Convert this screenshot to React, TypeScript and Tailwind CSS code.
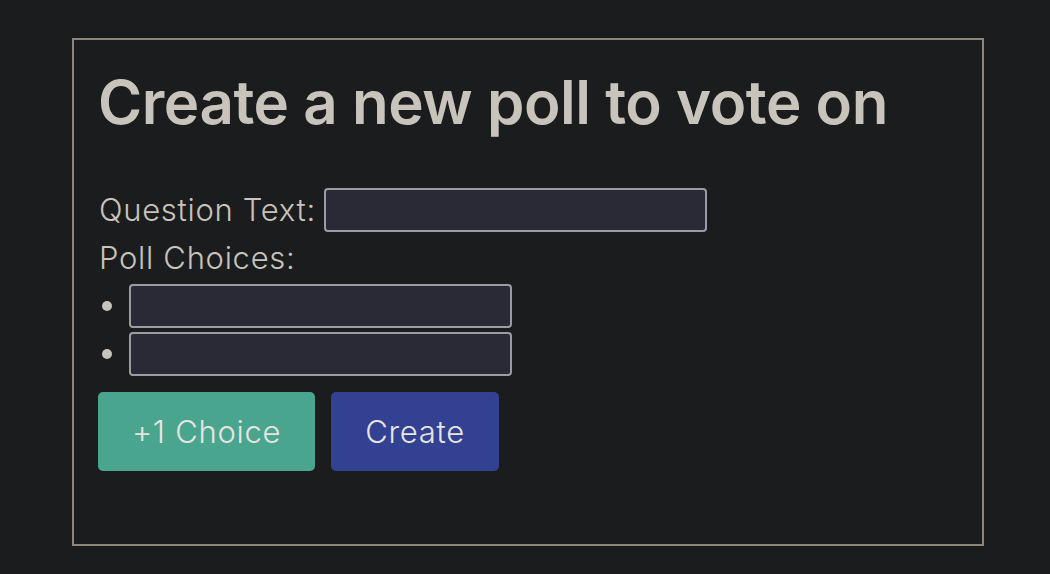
import React, { useState } from "react";

const App = () => {
  const [choices, setChoices] = useState<string[]>(["", ""]);
  const [question, setQuestion] = useState("");

  const addChoice = () => {
    setChoices([...choices, ""]);
  };

  return (
    <div
      className="min-h-[574px] w-full bg-[#1b1c1e] pt-[38px] pl-[72px] text-[#c8c3bb]"
      style={{ fontFamily: "Inter, 'Noto Sans', sans-serif" }}
    >
      <div className="box-border h-[508px] w-[912px] border-2 border-[#8d877b] px-[24px] pt-[24px]">
        <h1 className="text-[60px] leading-[76px] font-semibold tracking-[-0.45px]">
          Create a new poll to vote on
        </h1>
        <form
          className="mt-[46px] text-[31px] leading-[48px] font-light tracking-[0.7px]"
          onSubmit={(e) => e.preventDefault()}
        >
          <div className="flex items-center">
            <label className="pl-px">Question Text:</label>
            <input
              className="ml-[8px] h-[44px] w-[383px] rounded-[4px] border-2 border-[#9c9aa2] bg-[#2a2936] px-2 text-[#e6e3de] outline-none"
              value={question}
              onChange={(e) => setQuestion(e.target.value)}
            />
          </div>
          <div className="pl-px">Poll Choices:</div>
          <ul>
            {choices.map((choice, index) => (
              <li className="flex h-[48px] items-center" key={index}>
                <span className="ml-[4px] h-[10px] w-[10px] rounded-full bg-[#c8c3bb]" />
                <input
                  className="ml-[17px] h-[44px] w-[383px] rounded-[4px] border-2 border-[#9c9aa2] bg-[#2a2936] px-2 text-[#e6e3de] outline-none"
                  value={choice}
                  onChange={(e) => {
                    const next = [...choices];
                    next[index] = e.target.value;
                    setChoices(next);
                  }}
                />
              </li>
            ))}
          </ul>
          <div className="mt-[14px] flex gap-[16px]">
            <button
              type="button"
              className="h-[79px] w-[217px] rounded-[5px] bg-[#4aa58f] text-[#e8e5e0]"
              onClick={addChoice}
            >
              +1 Choice
            </button>
            <button
              type="submit"
              className="h-[79px] w-[168px] rounded-[5px] bg-[#334192] text-[#e8e5e0]"
            >
              Create
            </button>
          </div>
        </form>
      </div>
    </div>
  );
};

export default App;
